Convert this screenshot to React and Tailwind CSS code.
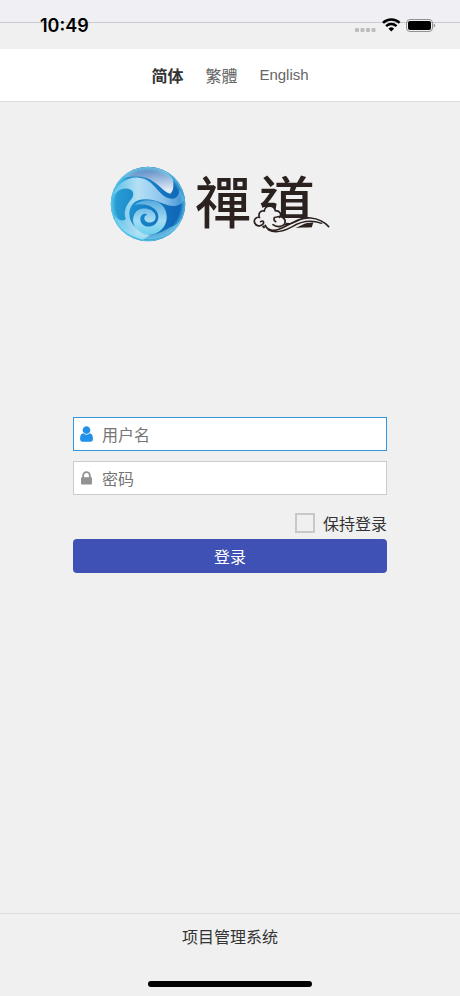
import { useState } from "react";

function StatusIcons() {
  return (
    <svg width="82" height="16" viewBox="0 0 82 16" aria-hidden="true">
      <g fill="#bdbdc0">
        <rect x="0" y="10" width="4" height="4" rx="1" />
        <rect x="5.500" y="10" width="4" height="4" rx="1" />
        <rect x="11" y="10" width="4" height="4" rx="1" />
        <rect x="16.500" y="10" width="4" height="4" rx="1" />
      </g>
      <g fill="none" stroke="#000" strokeWidth="2.500">
        <path d="M28 4.800a11.800 11.800 0 0 1 16.600 0" />
        <path d="M31.100 8.200a7.400 7.400 0 0 1 10.400 0" />
      </g>
      <path d="M33.500 10.700a4 4 0 0 1 5.600 0L36.300 13.600z" fill="#000" />
      <rect x="51.500" y="1.500" width="26" height="12" rx="3.500" fill="none" stroke="#929296" />
      <rect x="53" y="3" width="23" height="9" rx="2" fill="#000" />
      <path d="M78.700 5.500v4c2-.7 2-3.300 0-4z" fill="#929296" />
    </svg>
  );
}

function Orb() {
  return (
    <svg width="78" height="78" viewBox="2 4 234 234" className="shrink-0" aria-hidden="true">
      <defs>
        <linearGradient id="orb" x1="0" y1=".4" x2="1" y2=".5">
          <stop offset="0" stopColor="#2ba3d6" />
          <stop offset=".5" stopColor="#1580c6" />
          <stop offset="1" stopColor="#0d5fb2" />
        </linearGradient>
        <linearGradient id="cap" x1="0" y1="0" x2=".2" y2="1">
          <stop offset="0" stopColor="#3f76b9" />
          <stop offset="1" stopColor="#dfeaf7" />
        </linearGradient>
        <linearGradient id="wave" x1="0" y1="0" x2="1" y2="0">
          <stop offset="0" stopColor="#5cbfe6" />
          <stop offset=".35" stopColor="#b5e0f5" />
          <stop offset=".7" stopColor="#8cc4ec" />
          <stop offset="1" stopColor="#3b8fd2" />
        </linearGradient>
        <linearGradient id="curl" x1="0" y1="0" x2="0" y2="1">
          <stop offset="0" stopColor="#58aadf" />
          <stop offset=".6" stopColor="#a4dcf3" />
          <stop offset="1" stopColor="#6bd0ee" />
        </linearGradient>
        <radialGradient id="rim" cx=".5" cy=".5" r=".5">
          <stop offset=".86" stopColor="#6fd8f2" stopOpacity="0" />
          <stop offset="1" stopColor="#6fd8f2" stopOpacity=".75" />
        </radialGradient>
        <clipPath id="disc">
          <circle cx="119" cy="121" r="112" />
        </clipPath>
      </defs>
      <g clipPath="url(#disc)">
        <rect width="240" height="240" fill="url(#orb)" />
        <path d="M48 40C82 -4 165 -2 194 48C197 68 195 82 186 90C163 84 146 52 112 42C88 35 68 40 48 40Z" fill="url(#cap)" />
        <path d="M14 98C22 62 56 38 92 42C137 46 146 92 182 104C200 109 211 98 214 78L228 108C215 131 188 131 162 119C128 104 91 101 73 121C56 142 61 174 84 193C96 204 110 209 126 213L104 228C54 218 24 190 18 155C31 172 45 174 52 166C43 139 57 122 71 104C79 91 75 78 59 75C40 72 25 83 14 98Z" fill="url(#wave)" />
        <path d="M78 124C103 102 158 104 171 139C186 178 158 211 126 213C93 214 67 185 76 158C82 137 101 132 119 136C145 142 150 170 130 176C119 179 108 173 108 163C108 158 112 154 117 154C110 145 96 152 96 166C96 185 114 191 128 188C153 182 157 151 139 136C121 121 96 119 78 124Z" fill="url(#curl)" />
        <path d="M24 157C45 206 90 219 128 214C151 211 169 202 185 191C205 186 216 174 222 161C205 235 60 262 24 157Z" fill="#a7e4f5" opacity=".5" />
        <circle cx="119" cy="121" r="112" fill="url(#rim)" />
      </g>
    </svg>
  );
}

function Cloud() {
  return (
    <svg
      width="78"
      height="30"
      viewBox="200 118 234 90"
      className="absolute top-[39px] left-[57px]"
      aria-hidden="true"
    >
      <path
        d="M209 180C199 168 210 157 222 158C218 145 226 137 237 139C238 121 266 119 270 138C283 138 290 148 283 158C304 156 309 179 292 182C323 186 339 155 379 159C404 162 423 174 431 187C405 174 380 168 356 178C328 193 302 202 274 200C248 202 239 192 237 181C227 189 215 188 209 180Z"
        fill="#f0f0f0"
      />
      <g fill="none" stroke="#2b211e" strokeWidth="5" strokeLinecap="round">
        <path d="M226 171C234 165 238 174 231 180C223 187 209 183 207 172C206 162 213 157 222 158C218 145 226 137 237 139C239 121 265 119 270 138C283 138 290 148 283 158" />
        <path d="M271 171C263 165 264 157 274 157C289 152 302 162 299 174C296 186 275 190 263 180" />
        <path d="M240 182C247 200 271 200 288 191C323 174 345 157 376 160C400 162 418 173 430 186" />
        <path d="M249 196C270 207 299 198 321 186C348 169 378 165 409 176" strokeWidth="4" />
      </g>
      <path d="M288 184C315 186 336 158 371 157C347 162 323 184 288 184Z" fill="#2b211e" />
    </svg>
  );
}

function UserIcon() {
  return (
    <svg width="13" height="18" viewBox="0 0 1280 1792" fill="currentColor" aria-hidden="true">
      <path d="M1280 1399q0 109-62.500 187t-150.500 78h-854q-88 0-150.500-78t-62.500-187q0-85 8.500-160.500t31.500-152 58.500-131 94-89 134.500-34.500q131 128 313 128t313-128q76 0 134.500 34.500t94 89 58.500 131 31.500 152 8.500 160.500zm-256-887q0 159-112.500 271.500t-271.500 112.500-271.500-112.500-112.500-271.500 112.500-271.500 271.500-112.500 271.500 112.500 112.500 271.500z" />
    </svg>
  );
}

function LockIcon() {
  return (
    <svg width="11" height="17" viewBox="0 0 1152 1792" fill="currentColor" aria-hidden="true">
      <path d="M320 768h512v-192q0-106-75-181t-181-75-181 75-75 181v192zm832 96v576q0 40-28 68t-68 28h-960q-40 0-68-28t-28-68v-576q0-40 28-68t68-28h32v-192q0-184 132-316t316-132 316 132 132 316v192h32q40 0 68 28t28 68z" />
    </svg>
  );
}

function Field({ id, type, label, icon, active }) {
  return (
    <div
      className={`flex h-[34px] items-center border bg-white ${
        active ? "border-[#3296e0]" : "border-[#cbcbcb]"
      }`}
    >
      <label
        htmlFor={id}
        aria-label={label}
        className={`flex w-6 shrink-0 justify-center ${active ? "text-[#2191ea]" : "text-[#929292]"}`}
      >
        {icon}
      </label>
      <input
        id={id}
        type={type}
        placeholder={label}
        className="h-full min-w-0 flex-1 bg-transparent px-1 text-[#333] outline-none placeholder:text-[#757575]"
      />
    </div>
  );
}

export default function App() {
  const [keep, setKeep] = useState(false);

  return (
    <div className="flex min-h-screen flex-col bg-[#f0f0f0] font-['Noto_Sans_CJK_SC',sans-serif] text-base leading-6 text-[#333]">
      <div className="relative h-[49px]">
        <div className="h-[23px] border-b border-[#c9c9ce] bg-[#efeff4]" />
        <div className="absolute inset-x-0 top-[14px] flex items-center justify-between pr-[23px] pl-10">
          <span className="font-['Inter',sans-serif] text-lg leading-6 font-semibold text-black">10:49</span>
          <StatusIcons />
        </div>
      </div>

      <nav className="flex h-[53px] items-center justify-center gap-[22px] border-b border-[#dedede] bg-white text-[#666]">
        <a href="#zh-cn" className="font-bold text-[#333]">简体</a>
        <a href="#zh-tw" className="font-['Noto_Sans_CJK_TC',sans-serif]">繁體</a>
        <a href="#en" className="font-['Liberation_Sans',sans-serif] text-[15px]">English</a>
      </nav>

      <main className="flex flex-1 flex-col px-[73px] pt-[63px]">
        <h1 className="flex items-start justify-center gap-2 pr-[22px]">
          <Orb />
          <span className="relative flex w-[134px] gap-2 pt-1 font-['Noto_Sans_CJK_TC',sans-serif] text-[56px] leading-[60px] font-medium text-[#2b211e]">
            <span>禪</span>
            <span>道</span>
            <Cloud />
          </span>
        </h1>

        <form className="mt-[174px] flex flex-col" onSubmit={(e) => e.preventDefault()}>
          <div className="flex flex-col gap-[10px]">
            <Field id="account" type="text" label="用户名" icon={<UserIcon />} active />
            <Field id="password" type="password" label="密码" icon={<LockIcon />} />
          </div>
          <label className="mt-4 flex items-center gap-2 self-end">
            <input
              type="checkbox"
              checked={keep}
              onChange={(e) => setKeep(e.target.checked)}
              className="size-5 appearance-none border-2 border-[#c8c8c8] checked:bg-[#3f51b5]"
            />
            保持登录
          </label>
          <button type="submit" className="mt-1 h-[34px] rounded-sm bg-[#3f51b5] text-white">
            登录
          </button>
        </form>
      </main>

      <footer className="flex h-[83px] flex-col items-center justify-between border-t border-[#dcdcdc] pt-[10px] pb-[9px]">
        <a href="#about">项目管理系统</a>
        <div className="h-[6px] w-[164px] rounded-full bg-black" />
      </footer>
    </div>
  );
}
